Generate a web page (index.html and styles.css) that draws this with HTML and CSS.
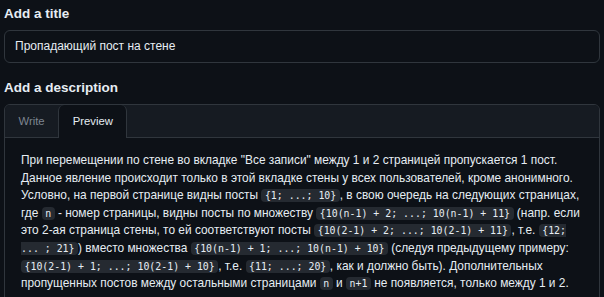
FILE: index.html
```html
<!DOCTYPE html>
<html lang="ru">
<head>
<meta charset="utf-8">
<link rel="stylesheet" href="styles.css">
</head>
<body>
<div class="form">
  <div class="label">Add a title</div>
  <div class="input">Пропадающий пост на стене</div>
  <div class="label label-desc">Add a description</div>
  <div class="editor">
    <div class="tabs">
      <div class="tab">Write</div>
      <div class="tab tab-active">Preview</div>
    </div>
    <div class="preview">
      <p>При перемещении по стене во вкладке "Все записи" между 1 и 2 страницей пропускается 1 пост.<br>Данное явление происходит только в этой вкладке стены у всех пользователей, кроме анонимного.<br>Условно, на первой странице видны посты <code>{1; ...; 10}</code>, в свою очередь на следующих страницах, где <code>n</code> - номер страницы, видны посты по множеству <code>{10(n-1) + 2; ...; 10(n-1) + 11}</code> (напр. если это 2-ая страница стены, то ей соответствуют посты <code>{10(2-1) + 2; ...; 10(2-1) + 11}</code>, т.е. <code>{12; ... ; 21}</code>) вместо множества <code>{10(n-1) + 1; ...; 10(n-1) + 10}</code> (следуя предыдущему примеру: <code>{10(2-1) + 1; ...; 10(2-1) + 10}</code>, т.е. <code>{11; ...; 20}</code>, как и должно быть). Дополнительных пропущенных постов между остальными страницами <code>n</code> и <code>n+1</code> не появляется, только между 1 и 2.</p>
    </div>
  </div>
</div>
</body>
</html>
```

FILE: styles.css
```css
html, body {
  margin: 0;
  padding: 0;
  background: #0d1117;
}
body {
  font-family: "Liberation Sans", Arial, sans-serif;
  color: #e6edf3;
}
.form {
  padding: 4px 4px 0 4px;
}
.label {
  font-weight: bold;
  font-size: 13.5px;
  line-height: 20px;
  color: #e6edf3;
}
.label-desc {
  margin-top: 15px;
}
.input {
  margin-top: 6px;
  height: 31px;
  border: 1px solid #30363d;
  border-radius: 6px;
  padding: 0 10px;
  font-size: 12px;
  line-height: 31px;
  color: #e6edf3;
  background: #0d1117;
}
.editor {
  margin-top: 6px;
  border: 1px solid #30363d;
  border-radius: 6px;
  overflow: hidden;
}
.tabs {
  display: flex;
  height: 32px;
  background: #161b22;
  border-bottom: 1px solid #30363d;
}
.tab {
  font-size: 11.3px;
  line-height: 32px;
  padding: 0 13.5px;
  color: #7d8590;
}
.tab-active {
  background: #0d1117;
  color: #e6edf3;
  border-left: 1px solid #30363d;
  border-right: 1px solid #30363d;
  border-top-left-radius: 6px;
  border-top-right-radius: 6px;
  height: 33px;
  margin-bottom: -1px;
}
.preview {
  padding: 14px 16px 16px 16px;
}
.preview p {
  margin: 0;
  font-size: 11.9px;
  line-height: 17.6px;
}
code {
  font-family: "DejaVu Sans Mono", "Liberation Mono", monospace;
  font-size: 9.9px;
  padding: 1px 3.5px;
  border-radius: 4px;
  background: #252a31;
}
```
